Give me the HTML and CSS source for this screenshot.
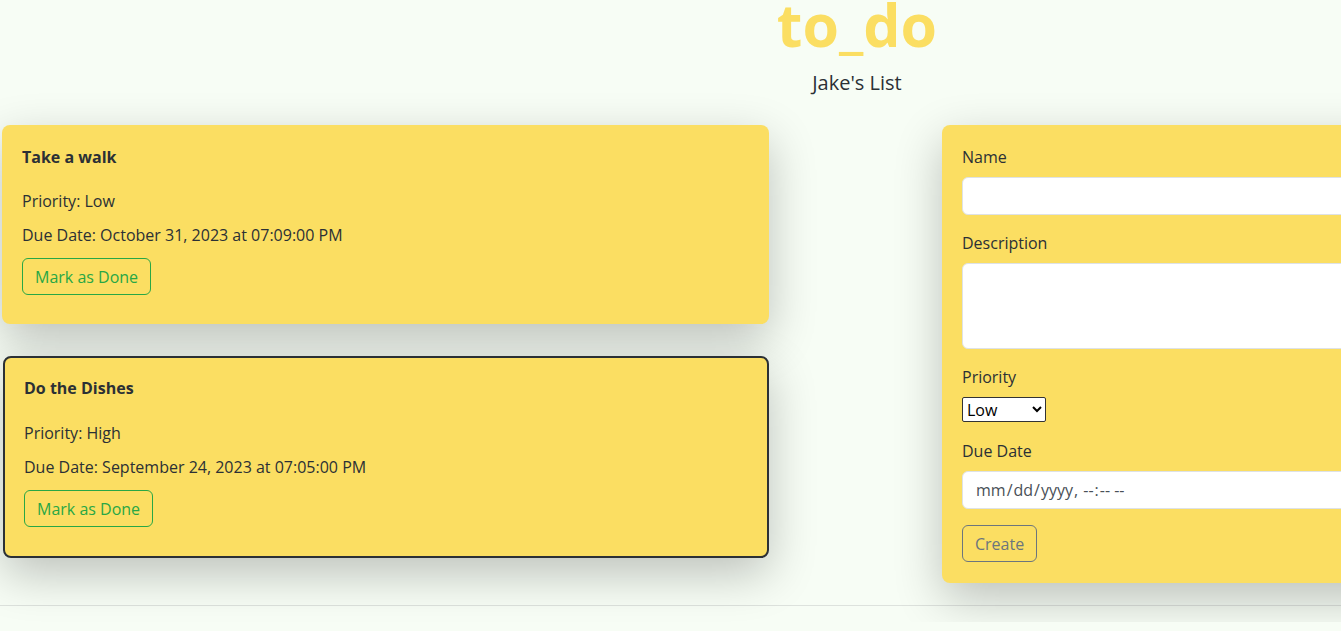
FILE: index.html
```html
<!DOCTYPE html>
<html lang="en">
<head>
<meta charset="utf-8">
<title>to_do</title>
<link rel="stylesheet" href="styles.css">
</head>
<body>
<div class="viewport">
  <div class="page">
    <header class="header">
      <h1 class="brand">to_do</h1>
      <p class="subtitle">Jake's List</p>
    </header>
    <div class="row">
      <div class="col col-list">
        <div class="card todo">
          <div class="todo-title">Take a walk</div>
          <p class="todo-line todo-priority">Priority: Low</p>
          <p class="todo-line">Due Date: October 31, 2023 at 07:09:00 PM</p>
          <button class="btn btn-success-outline" type="button">Mark as Done</button>
        </div>
        <div class="card todo todo-selected">
          <div class="todo-title">Do the Dishes</div>
          <p class="todo-line todo-priority">Priority: High</p>
          <p class="todo-line">Due Date: September 24, 2023 at 07:05:00 PM</p>
          <button class="btn btn-success-outline" type="button">Mark as Done</button>
        </div>
      </div>
      <div class="col col-form">
        <form class="card form-card">
          <div class="field">
            <label class="label" for="name">Name</label>
            <input class="control" id="name" type="text">
          </div>
          <div class="field">
            <label class="label" for="desc">Description</label>
            <textarea class="control control-area" id="desc"></textarea>
          </div>
          <div class="field field-select">
            <label class="label" for="prio">Priority</label>
            <select class="select" id="prio">
              <option>Low</option>
              <option>Medium</option>
              <option>High</option>
            </select>
          </div>
          <div class="field">
            <label class="label" for="due">Due Date</label>
            <input class="control control-date" id="due" type="datetime-local">
          </div>
          <button class="btn btn-secondary-outline" type="button">Create</button>
        </form>
      </div>
    </div>
    <hr class="rule">
  </div>
</div>
</body>
</html>
```
FILE: styles.css
```css
html, body {
  margin: 0;
  padding: 0;
}
body {
  background: #f7fdf5;
  color: #2b3035;
  font-family: "Open Sans", "Liberation Sans", sans-serif;
  font-size: 16px;
  line-height: 1.5;
}
.viewport {
  width: 100%;
  overflow: hidden;
}
.page {
  width: 1714px;
}
.header {
  text-align: center;
}
.brand {
  margin: -5px 0 0;
  font-size: 59px;
  line-height: 58px;
  font-weight: 700;
  color: #fbde62;
}
.subtitle {
  margin: 15px 0 0;
  font-size: 20px;
  line-height: 30px;
}
.row {
  display: grid;
  grid-template-columns: 857px 857px;
  margin-top: 27px;
}
.col-list {
  padding-left: 2px;
  display: flex;
  flex-direction: column;
  gap: 32px;
}
.col-form {
  padding-left: 85px;
}
.card {
  background: #fbde62;
  border-radius: 8px;
  box-shadow: 0 1rem 3rem rgba(0, 0, 0, 0.24);
  box-sizing: border-box;
  width: 767px;
}
.todo {
  padding: 20px 20px 29px;
}
.todo-selected {
  border: 2px solid #2b3035;
  margin-left: 1px;
  width: 766px;
  padding: 18px 19px 29px;
}
.todo-title {
  font-weight: 700;
  line-height: 24px;
}
.todo-line {
  margin: 0 0 10px;
}
.todo-priority {
  margin-top: 20px;
}
.todo-selected .todo-priority {
  margin-top: 21px;
}
.btn {
  display: inline-block;
  font-family: inherit;
  font-size: 16px;
  line-height: 24px;
  height: 37px;
  padding: 0 12px;
  border-radius: 6px;
  background: transparent;
  cursor: pointer;
}
.todo .btn {
  margin-top: 1px;
}
.btn-success-outline {
  border: 1px solid #28a745;
  color: #28a745;
}
.btn-secondary-outline {
  border: 1px solid #6c757d;
  color: #6c757d;
}
.form-card {
  padding: 20px 20px 21px;
}
.field {
  margin-bottom: 16px;
}
.field-select {
  margin-bottom: 17px;
}
.label {
  display: block;
  line-height: 24px;
  margin-bottom: 8px;
}
.control {
  display: block;
  width: 100%;
  height: 38px;
  box-sizing: border-box;
  font-family: inherit;
  font-size: 16px;
  line-height: 24px;
  padding: 6px 12px;
  border: 1px solid #dee2e6;
  border-radius: 6px;
  background: #fff;
  color: #212529;
}
.control-area {
  height: 86px;
  resize: vertical;
}
.control-date {
  color: #495057;
}
.select {
  display: block;
  font-family: inherit;
  font-size: 16px;
  height: 25px;
  width: 84px;
  border: 1px solid #333;
  border-radius: 2px;
  background: #fff;
  color: #000;
}
.rule {
  margin: 22px 0 16px;
  border: 0;
  border-top: 1px solid #dde2dd;
}
```
